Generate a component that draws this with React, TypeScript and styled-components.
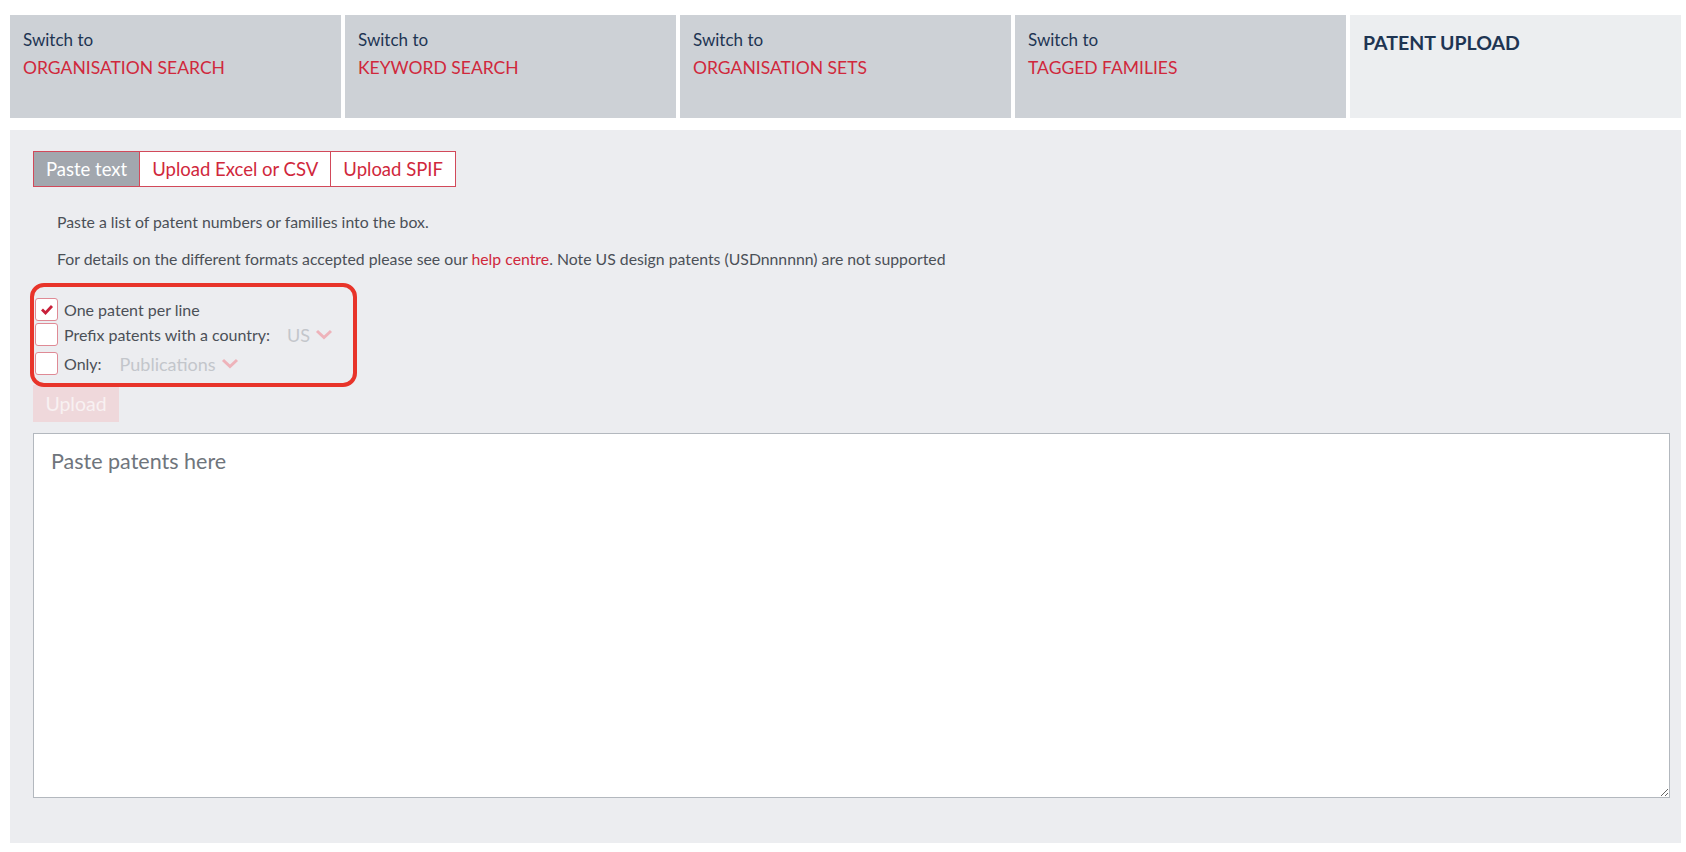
import * as React from "react";
import styled, { createGlobalStyle } from "styled-components";

const GlobalStyle = createGlobalStyle`
  html, body {
    margin: 0;
    padding: 0;
    background: #ffffff;
    font-family: "Lato", "Noto Sans", sans-serif;
  }
`;

const Page = styled.div`
  padding: 15px 5px 8px 10px;
`;

const TabBar = styled.div`
  display: flex;
  gap: 4px;
`;

const Tab = styled.div<{ $active?: boolean }>`
  flex: 1;
  height: 103px;
  box-sizing: border-box;
  padding: 14px 13px;
  background: ${(p) => (p.$active ? "#eceef0" : "#cdd1d6")};
  cursor: pointer;
`;

const TabLabel = styled.div`
  font-size: 17px;
  line-height: 22px;
  color: #1e3553;
`;

const TabTitle = styled.div`
  font-size: 17.5px;
  line-height: 22px;
  margin-top: 6px;
  color: #d0283c;
`;

const ActiveTitle = styled.div`
  font-size: 19.5px;
  line-height: 28px;
  font-weight: 700;
  color: #1e3553;
`;

const Panel = styled.div`
  margin-top: 12px;
  background: #ecedf0;
  padding: 21px 11px 45px 23px;
`;

const SubTabs = styled.div`
  display: inline-flex;
  border: 1px solid #d2495a;
`;

const SubTab = styled.div<{ $active?: boolean }>`
  height: 34px;
  display: flex;
  align-items: center;
  padding: 0 12px;
  font-size: 18.5px;
  color: ${(p) => (p.$active ? "#ffffff" : "#d0283c")};
  background: ${(p) => (p.$active ? "#a2a7ae" : "#ffffff")};
  & + & {
    border-left: 1px solid #d2495a;
  }
`;

const Info = styled.div`
  margin: 24px 0 0 24px;
  font-size: 15.8px;
  line-height: 22px;
  color: #4b5057;
`;

const InfoLine = styled.p`
  margin: 0 0 15px;
`;

const HelpLink = styled.a`
  color: #d0283c;
  text-decoration: none;
`;

const Options = styled.div`
  position: relative;
  margin: 28px 0 0 2px;
  width: 300px;
  &::after {
    content: "";
    position: absolute;
    left: -5px;
    top: -15px;
    width: 327px;
    height: 104px;
    box-sizing: border-box;
    border: 4px solid #e8342a;
    border-radius: 14px;
    pointer-events: none;
  }
`;

const OptionRow = styled.label<{ $space: number }>`
  display: flex;
  align-items: center;
  height: 23px;
  margin-bottom: ${(p) => p.$space}px;
  font-size: 16px;
  color: #4b5057;
`;

const Box = styled.span`
  width: 23px;
  height: 23px;
  flex: none;
  box-sizing: border-box;
  border: 1px solid #df8a95;
  border-radius: 3px;
  background: #ffffff;
  display: flex;
  align-items: center;
  justify-content: center;
  margin-right: 6px;
`;

const Select = styled.span<{ $gap: number }>`
  display: inline-flex;
  align-items: center;
  margin-left: ${(p) => p.$gap}px;
  font-size: 18px;
  color: #c3c6cb;
  gap: 5px;
`;

const UploadButton = styled.button`
  display: block;
  margin-top: 10px;
  width: 86px;
  height: 37px;
  border: none;
  background: #efd8db;
  color: #f8f1f2;
  font-family: inherit;
  font-size: 19.5px;
  padding: 0;
`;

const PatentBox = styled.textarea`
  display: block;
  margin-top: 11px;
  width: 100%;
  height: 365px;
  box-sizing: border-box;
  border: 1px solid #b3b8be;
  background: #ffffff;
  padding: 14px 17px;
  font-family: inherit;
  font-size: 21.5px;
  resize: both;
  &::placeholder {
    color: #6f757c;
  }
`;

const Chevron = () => (
  <svg width="18" height="11" viewBox="0 0 18 11">
    <polyline points="2,2 9,8.5 16,2" fill="none" stroke="#eeb3ba" strokeWidth="3" />
  </svg>
);

const Tick = () => (
  <svg width="14" height="11" viewBox="0 0 14 11">
    <polyline points="2,5.5 5.5,9 12,2" fill="none" stroke="#c8203a" strokeWidth="2.8" />
  </svg>
);

const switches = ["ORGANISATION SEARCH", "KEYWORD SEARCH", "ORGANISATION SETS", "TAGGED FAMILIES"];

export default function App() {
  return (
    <Page>
      <GlobalStyle />
      <TabBar>
        {switches.map((s) => (
          <Tab key={s}>
            <TabLabel>Switch to</TabLabel>
            <TabTitle>{s}</TabTitle>
          </Tab>
        ))}
        <Tab $active>
          <ActiveTitle>PATENT UPLOAD</ActiveTitle>
        </Tab>
      </TabBar>
      <Panel>
        <SubTabs>
          <SubTab $active>Paste text</SubTab>
          <SubTab>Upload Excel or CSV</SubTab>
          <SubTab>Upload SPIF</SubTab>
        </SubTabs>
        <Info>
          <InfoLine>Paste a list of patent numbers or families into the box.</InfoLine>
          <InfoLine>
            For details on the different formats accepted please see our <HelpLink href="#">help centre</HelpLink>. Note
            US design patents (USDnnnnnn) are not supported
          </InfoLine>
        </Info>
        <Options>
          <OptionRow $space={2}>
            <Box>
              <Tick />
            </Box>
            One patent per line
          </OptionRow>
          <OptionRow $space={6}>
            <Box />
            Prefix patents with a country:
            <Select $gap={17}>
              US <Chevron />
            </Select>
          </OptionRow>
          <OptionRow $space={0}>
            <Box />
            Only:
            <Select $gap={18}>
              Publications <Chevron />
            </Select>
          </OptionRow>
        </Options>
        <UploadButton disabled>Upload</UploadButton>
        <PatentBox placeholder="Paste patents here" />
      </Panel>
    </Page>
  );
}
